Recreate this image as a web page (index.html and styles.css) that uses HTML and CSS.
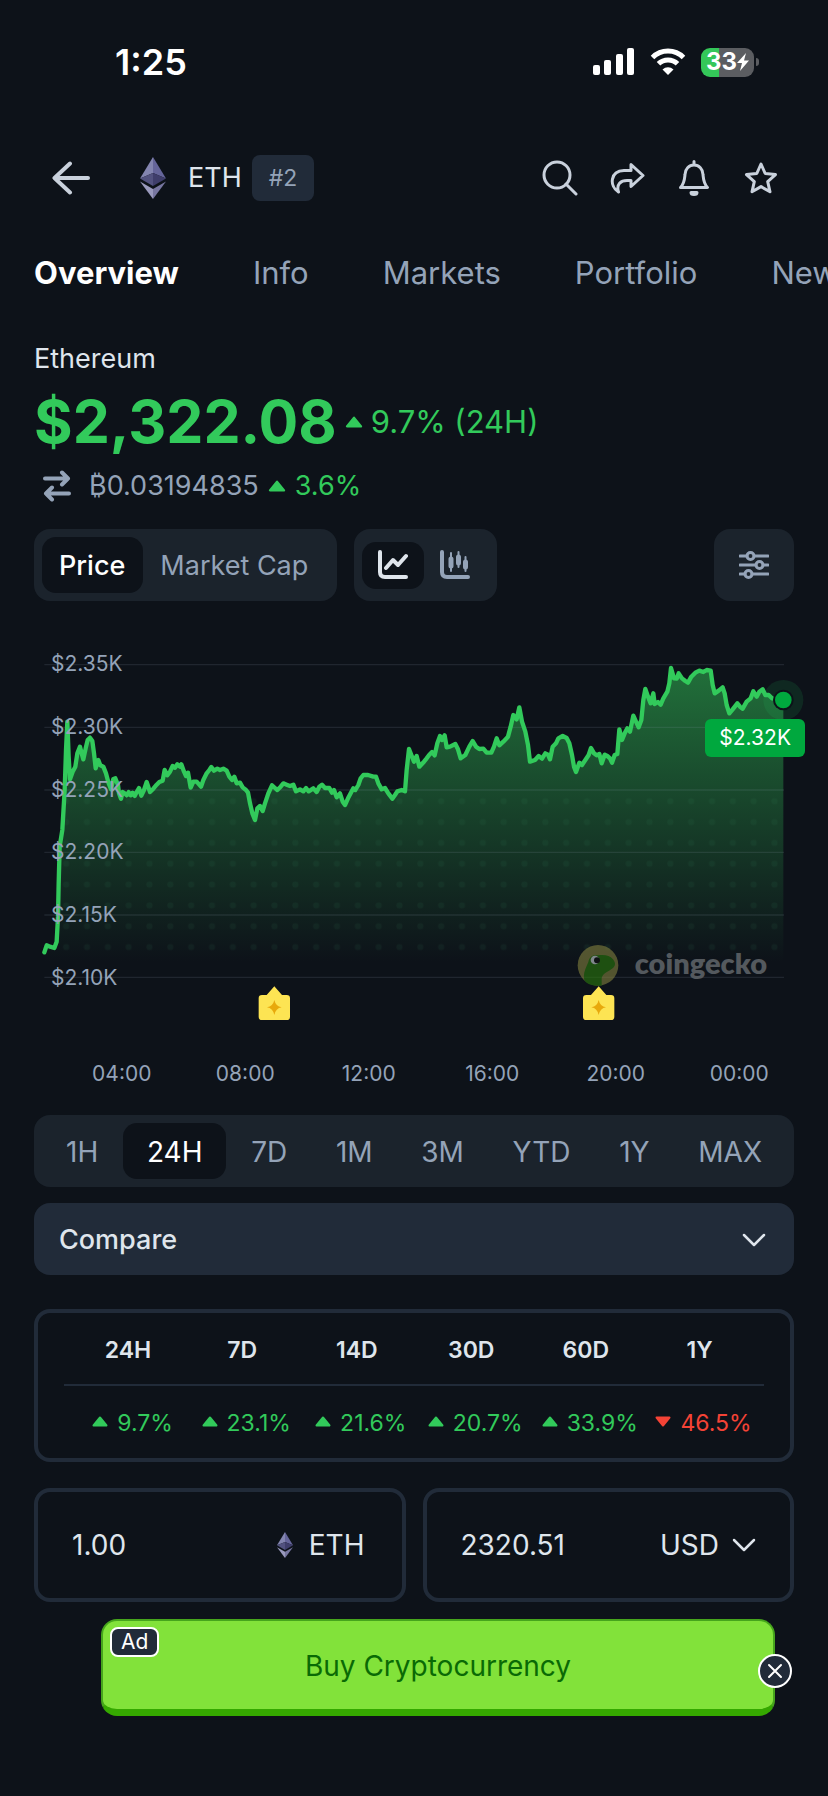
FILE: index.html
```
<!DOCTYPE html>
<html lang="en">
<head>
	<meta charset="utf-8">
	<meta name="viewport" content="width=device-width, initial-scale=1">
	<title>ETH - Ethereum</title>
	<link rel="stylesheet" href="styles.css">
</head>
<body>
	<svg class="defs" width="0" height="0">
		<symbol id="eth" viewBox="0 0 26 42">
			<path d="M13 0L0 21.500l13-5.500z" fill="#8385b0"/>
			<path d="M13 0l13 21.500L13 16z" fill="#65659a"/>
			<path d="M0 21.500L13 16v13z" fill="#52527f"/>
			<path d="M26 21.500L13 16v13z" fill="#3f3e6b"/>
			<path d="M0 24.500L13 32v10z" fill="#9a9abd"/>
			<path d="M26 24.500L13 32v10z" fill="#7776a0"/>
		</symbol>
		<symbol id="up" viewBox="0 0 16 11">
			<path d="M8 1.500L14.500 9.500H1.500z" fill="currentColor" stroke="currentColor" stroke-width="2" stroke-linejoin="round"/>
		</symbol>
		<symbol id="down" viewBox="0 0 16 11">
			<path d="M8 9.500L14.500 1.500H1.500z" fill="currentColor" stroke="currentColor" stroke-width="2" stroke-linejoin="round"/>
		</symbol>
		<symbol id="chevron" viewBox="0 0 24 14">
			<path d="M2 2l10 10L22 2" fill="none" stroke="currentColor" stroke-width="2.500" stroke-linecap="round" stroke-linejoin="round"/>
		</symbol>
	</svg>

	<div class="status">
		<span class="status_time">1:25</span>
		<div class="status_icons">
			<svg width="42" height="28" viewBox="0 0 42 28" fill="#fff">
				<rect x="0" y="17" width="7" height="10" rx="2"/>
				<rect x="11" y="12" width="7" height="15" rx="2"/>
				<rect x="23" y="6" width="7" height="21" rx="2"/>
				<rect x="34" y="0" width="7" height="27" rx="2"/>
			</svg>
			<svg width="36" height="28" viewBox="0 0 36 28" fill="none" stroke="#fff" stroke-width="5">
				<path d="M2.500 9.500a22 22 0 0 1 31 0"/>
				<path d="M8.500 15.800a13.500 13.500 0 0 1 19 0"/>
				<path d="M12.500 21.500a8 8 0 0 1 11 0L18 27z" fill="#fff" stroke="none"/>
			</svg>
			<div class="battery">
				<span>33</span>
				<svg width="12" height="18" viewBox="0 0 12 18"><path d="M9 0L0 10h5L3 18l9-10.500H7z" fill="#fff"/></svg>
			</div>
		</div>
	</div>

	<header class="header">
		<button class="icon_btn back" aria-label="Back">
			<svg width="38" height="34" viewBox="0 0 38 34"><path d="M18 2.500L2.500 17 18 31.500M2.500 17H36"/></svg>
		</button>
		<svg class="coin" width="26" height="42"><use href="#eth"/></svg>
		<span class="symbol">ETH</span>
		<span class="rank">#2</span>
		<div class="actions">
			<button class="icon_btn" aria-label="Search">
				<svg width="36" height="36" viewBox="0 0 36 36"><circle cx="15" cy="15" r="13"/><path d="M24 24l10 10"/></svg>
			</button>
			<button class="icon_btn" aria-label="Share">
				<svg width="36" height="36" viewBox="0 0 36 36"><path d="M22 4.500L34 15.500 22 26.500V20.500h-4C12 20.500 7 24 9.500 32 0 26 1 11 15 10.500h7z"/></svg>
			</button>
			<button class="icon_btn" aria-label="Alerts">
				<svg width="36" height="36" viewBox="0 0 36 36"><path d="M18 1.500V4M4.500 27.500c4-4 4-8 4.500-13a9 9.500 0 0 1 18 0c.500 5 .500 9 4.500 13z"/><path d="M15 32.500h6a3 2 0 0 1-6 0z"/></svg>
			</button>
			<button class="icon_btn" aria-label="Favourite">
				<svg width="36" height="36" viewBox="0 0 36 36"><path d="M18 4l4.200 9.500 10.300 1.100-7.800 7 2.300 10.200-9-5.200-9 5.200 2.300-10.200-7.800-7 10.300-1.100z"/></svg>
			</button>
		</div>
	</header>

	<nav class="tabs">
		<a class="tab active" href="#">Overview</a>
		<a class="tab" href="#">Info</a>
		<a class="tab" href="#">Markets</a>
		<a class="tab" href="#">Portfolio</a>
		<a class="tab" href="#">News</a>
	</nav>

	<main>
		<section class="summary">
			<h1 class="name">Ethereum</h1>
			<div class="price_row">
				<span class="price">$2,322.08</span>
				<svg width="18" height="12"><use href="#up"/></svg>
				<span class="change">9.7% (24H)</span>
			</div>
			<div class="btc_row">
				<svg class="swap" width="28" height="32" viewBox="0 0 28 32"><path d="M2 8.500h23M19 2.500l6 6-6 6M26 23.500H3M9 17.500l-6 6 6 6"/></svg>
				<span class="btc">₿0.03194835</span>
				<svg class="green" width="18" height="12"><use href="#up"/></svg>
				<span class="green">3.6%</span>
			</div>
		</section>

		<div class="toolbar">
			<div class="group">
				<button class="seg active">Price</button>
				<button class="seg">Market Cap</button>
			</div>
			<div class="group">
				<button class="seg_icon active" aria-label="Line chart">
					<svg width="30" height="30" viewBox="0 0 30 30"><path d="M2 2v20q0 5 5 5h21M8 18l7-8 5 5 8-9"/></svg>
				</button>
				<button class="seg_icon" aria-label="Candlestick chart">
					<svg width="30" height="30" viewBox="0 0 30 30"><path d="M2 2v20q0 5 5 5h21"/><path class="thin" d="M11 3v18M18.500 2v15M25.500 7v14"/><path class="body" d="M11 9v7M18.500 7v6M25.500 12v5"/></svg>
				</button>
			</div>
			<button class="settings" aria-label="Chart settings">
				<svg width="30" height="30" viewBox="0 0 30 30"><path d="M1 6h7M15 6h14M1 15h16M24 15h5M1 24h5M13 24h16"/><circle cx="11.500" cy="6" r="3.500"/><circle cx="20.500" cy="15" r="3.500"/><circle cx="9.500" cy="24" r="3.500"/></svg>
			</button>
		</div>

		<section class="chart">
			<svg class="plot" viewBox="-60 0 2484 1230">
				<defs>
					<linearGradient id="fade" gradientUnits="userSpaceOnUse" x1="0" y1="110" x2="0" y2="1042">
						<stop offset="0" stop-color="#34c759" stop-opacity=".52"/>
						<stop offset=".4" stop-color="#34c759" stop-opacity=".3"/>
						<stop offset=".6" stop-color="#34c759" stop-opacity=".19"/>
						<stop offset=".8" stop-color="#34c759" stop-opacity=".08"/>
						<stop offset=".95" stop-color="#34c759" stop-opacity="0"/>
					</linearGradient>
					<pattern id="dots" patternUnits="userSpaceOnUse" x="45" y="420" width="62.500" height="62.500">
						<circle cx="31" cy="31" r="9" fill="#3c8f62" fill-opacity=".09"/>
					</pattern>
				</defs>
				<path id="area" fill="url(#fade)"/>
				<path id="dotted" fill="url(#dots)"/>
				<path class="grid" d="M73 104H2292M73 292H2292M73 480H2292M73 667H2292M73 855H2292M73 1042H2292"/>
				<path id="line"/>
				<circle cx="2290" cy="210" r="60" fill="#22c55e" fill-opacity=".13"/>
				<circle cx="2290" cy="210" r="31" fill="#0d1219"/>
				<circle cx="2290" cy="210" r="25" fill="#00a83e"/>
				<g id="gecko" opacity=".6">
					<circle cx="1734" cy="1006" r="61" fill="#83813f"/>
					<path d="M1693 1050c-5-20 4-34 12-54 4-18 14-22 30-20 20-2 34 0 44 12 8 10 8 18 0 26-14 12-30 14-34 30v23c-20 2-44-2-52-17z" fill="#2a7a0c"/>
					<circle cx="1725" cy="990" r="13" fill="#ccd3d6"/>
					<circle cx="1731" cy="991" r="9" fill="#111"/>
				</g>
				<g id="note">
					<path d="M726 1095h14l23-26 23 26h14q10 0 10 10v55q0 10-10 10h-74q-10 0-10-10v-55q0-10 10-10z" fill="#fde453"/>
					<path d="M763 1110q4 19 22 22-18 3-22 23-4-20-22-23 18-3 22-22z" fill="#e8a90c"/>
				</g>
				<use href="#note" x="973"/>
			</svg>
			<div class="y_axis">
				<span>$2.35K</span>
				<span>$2.30K</span>
				<span>$2.25K</span>
				<span>$2.20K</span>
				<span>$2.15K</span>
				<span>$2.10K</span>
			</div>
			<span class="watermark">coingecko</span>
			<span class="tip">$2.32K</span>
		</section>
		<div class="x_axis">
			<span>04:00</span>
			<span>08:00</span>
			<span>12:00</span>
			<span>16:00</span>
			<span>20:00</span>
			<span>00:00</span>
		</div>

		<div class="ranges">
			<button class="range">1H</button>
			<button class="range active">24H</button>
			<button class="range">7D</button>
			<button class="range">1M</button>
			<button class="range">3M</button>
			<button class="range">YTD</button>
			<button class="range">1Y</button>
			<button class="range">MAX</button>
		</div>

		<button class="compare">
			<span>Compare</span>
			<svg width="24" height="14"><use href="#chevron"/></svg>
		</button>

		<div class="panel performance">
			<table>
				<thead>
					<tr><th>24H</th><th>7D</th><th>14D</th><th>30D</th><th>60D</th><th>1Y</th></tr>
				</thead>
				<tbody>
					<tr>
						<td><svg width="16" height="11"><use href="#up"/></svg>9.7%</td>
						<td><svg width="16" height="11"><use href="#up"/></svg>23.1%</td>
						<td><svg width="16" height="11"><use href="#up"/></svg>21.6%</td>
						<td><svg width="16" height="11"><use href="#up"/></svg>20.7%</td>
						<td><svg width="16" height="11"><use href="#up"/></svg>33.9%</td>
						<td class="red"><svg width="16" height="11"><use href="#down"/></svg>46.5%</td>
					</tr>
				</tbody>
			</table>
		</div>

		<div class="converter">
			<div class="panel field">
				<input id="amount" type="text" value="1.00">
				<svg width="16" height="26"><use href="#eth"/></svg>
				<label for="amount">ETH</label>
			</div>
			<div class="panel field">
				<input type="text" value="2320.51" aria-label="Amount in USD">
				<div class="currency">
					<select aria-label="Currency">
						<option>USD</option>
					</select>
					<svg width="24" height="14"><use href="#chevron"/></svg>
				</div>
			</div>
		</div>

		<div class="ad">
			<a class="ad_link" href="#">Buy Cryptocurrency</a>
			<span class="ad_tag">Ad</span>
			<button class="ad_close" aria-label="Close ad">
				<svg width="16" height="16" viewBox="0 0 16 16"><path d="M2 2l12 12M14 2L2 14"/></svg>
			</button>
		</div>
	</main>
	<script src="script.js"></script>
</body>
</html>
```

FILE: styles.css
```
* {
	box-sizing: border-box;
}
body {
	margin: 0;
	background-color: #0d1219;
	color: #dfe5ec;
	font-family: Inter, "Noto Sans", sans-serif;
	font-size: 28px;
	line-height: 40px;
	overflow-x: hidden;
}
button, input, select {
	margin: 0;
	padding: 0;
	border: 0;
	background: none;
	color: inherit;
	font: inherit;
}
a {
	text-decoration: none;
}
svg {
	display: block;
	flex: none;
}
.defs {
	position: absolute;
}
.green {
	color: #32ca5b;
}

/* status bar */
.status {
	display: flex;
	align-items: center;
	justify-content: space-between;
	height: 124px;
	padding: 0 69px 0 115px;
	color: #fff;
}
.status_time {
	font-size: 36px;
	font-weight: 600;
}
.status_icons {
	display: flex;
	align-items: center;
	gap: 15px;
}
.battery {
	position: relative;
	display: flex;
	align-items: center;
	justify-content: center;
	width: 53px;
	height: 29px;
	margin-right: 5px;
	border-radius: 9px;
	background: linear-gradient(to right, #34c759 34%, #5b5d61 34%);
	font-size: 24px;
	font-weight: 700;
}
.battery::after {
	content: "";
	position: absolute;
	right: -5px;
	width: 3px;
	height: 8px;
	border-radius: 0 3px 3px 0;
	background-color: #5b5d61;
}

/* header */
.header {
	display: flex;
	align-items: center;
	height: 108px;
	padding: 0 49px 0 52px;
}
.icon_btn svg {
	fill: none;
	stroke: #c9d1dc;
	stroke-width: 3;
	stroke-linecap: round;
	stroke-linejoin: round;
}
.back svg {
	stroke-width: 4;
}
.coin {
	margin: 0 22px 0 50px;
}
.symbol {
	font-size: 27px;
}
.rank {
	margin-left: 10px;
	padding: 3px 17px;
	border-radius: 8px;
	background-color: #212b39;
	color: #94a3b8;
	font-size: 23px;
}
.actions {
	display: flex;
	gap: 31px;
	margin-left: auto;
}

/* tabs */
.tabs {
	display: flex;
	align-items: center;
	gap: 74px;
	height: 82px;
	padding-left: 34px;
	overflow: hidden;
	font-size: 31px;
}
.tab {
	color: #94a3b8;
}
.tab.active {
	color: #fff;
	font-weight: 700;
}

main {
	padding: 25px 34px 80px;
}
.name {
	margin: 0;
	font-size: 27px;
	font-weight: 400;
}
.price_row {
	display: flex;
	align-items: center;
	gap: 8px;
	height: 86px;
	color: #32ca5b;
}
.price {
	font-size: 59px;
	font-weight: 700;
}
.change {
	font-size: 31px;
}
.btc_row {
	display: flex;
	align-items: center;
	gap: 9px;
	height: 42px;
	font-size: 27px;
}
.swap {
	margin: 0 9px;
	fill: none;
	stroke: #94a3b8;
	stroke-width: 4;
	stroke-linecap: round;
	stroke-linejoin: round;
}
.btc {
	color: #94a3b8;
}

/* chart switches */
.toolbar {
	display: flex;
	gap: 17px;
	height: 72px;
	margin-top: 22px;
	font-size: 27px;
}
.group {
	display: flex;
	align-items: center;
	padding: 8px 11px 8px 8px;
	border-radius: 16px;
	background-color: #1b232c;
}
.seg {
	height: 56px;
	padding: 2px 18px 0 17px;
	border-radius: 14px;
	color: #94a3b8;
}
.seg_icon {
	display: flex;
	align-items: center;
	justify-content: center;
	width: 62px;
	height: 47px;
	border-radius: 14px;
	color: #94a3b8;
}
.seg.active, .seg_icon.active {
	background-color: #0d1219;
	color: #fff;
}
.seg.active {
	font-weight: 500;
}
.seg_icon svg, .settings svg {
	fill: none;
	stroke: currentColor;
	stroke-width: 4;
	stroke-linecap: round;
	stroke-linejoin: round;
}
.seg_icon.active svg {
	color: #dfe5ec;
}
.seg_icon .thin {
	stroke-width: 2;
}
.seg_icon .body {
	stroke-width: 5;
}
.settings {
	display: flex;
	align-items: center;
	justify-content: center;
	width: 80px;
	margin-left: auto;
	border-radius: 16px;
	background-color: #1b232c;
	color: #94a3b8;
}
.settings svg {
	stroke-width: 3;
}

/* chart */
.chart {
	position: relative;
	margin: 29px -34px 0;
}
.plot {
	width: 100%;
	height: auto;
}
.grid {
	fill: none;
	stroke: #94a3b8;
	stroke-opacity: .14;
	stroke-width: 4;
}
#line {
	fill: none;
	stroke: #32ca5b;
	stroke-width: 13;
	stroke-linecap: round;
	stroke-linejoin: round;
}
.y_axis {
	position: absolute;
	top: 3px;
	left: 51px;
	height: calc(92% - 1px);
	display: flex;
	flex-direction: column;
	justify-content: space-around;
	color: #94a3b8;
	font-size: 21px;
}
.watermark {
	position: absolute;
	right: 61px;
	bottom: 57px;
	color: #54595e;
	font-family: Lato, sans-serif;
	font-size: 29px;
	font-weight: 800;
}
.tip {
	position: absolute;
	top: 89px;
	right: 23px;
	padding: 0 14px;
	border-radius: 6px;
	background-color: #00a83e;
	color: #fff;
	font-size: 21px;
	line-height: 38px;
}
.x_axis {
	display: grid;
	grid-template-columns: repeat(6, 1fr);
	margin-right: -7px;
	padding: 14px 0 21px 26px;
	color: #94a3b8;
	font-size: 21px;
	text-align: center;
}

/* ranges */
.ranges {
	display: flex;
	align-items: center;
	justify-content: space-between;
	height: 72px;
	padding: 8px;
	border-radius: 16px;
	background-color: #1b232c;
}
.range {
	height: 56px;
	padding: 2px 24px 0;
	border-radius: 14px;
	color: #94a3b8;
}
.range.active {
	background-color: #0d1219;
	color: #fff;
}
.compare {
	display: flex;
	align-items: center;
	justify-content: space-between;
	width: 100%;
	height: 72px;
	margin-top: 16px;
	padding: 2px 28px 0 25px;
	border-radius: 16px;
	background-color: #212b39;
	font-size: 27px;
	font-weight: 500;
}

/* performance table */
.panel {
	border: 4px solid #212b39;
	border-radius: 16px;
}
.performance {
	margin-top: 34px;
	padding: 0 26px;
}
table {
	width: 100%;
	table-layout: fixed;
	border-collapse: collapse;
	font-size: 23px;
}
th, td {
	height: 72px;
	padding: 2px 0 0;
	text-align: center;
	white-space: nowrap;
}
th {
	border-bottom: 2px solid #212b39;
	font-weight: 600;
}
th:first-child {
	width: 121px;
	padding-left: 7px;
}
th:last-child {
	width: 121px;
	padding-right: 8px;
}
td {
	height: 73px;
	padding-left: 8px;
	color: #32ca5b;
}
td.red {
	padding-right: 8px;
	color: #f44336;
}
td:first-child {
	padding-left: 16px;
}
td svg {
	display: inline-block;
	margin-right: 9px;
	vertical-align: 4px;
}

/* converter */
.converter {
	display: grid;
	grid-template-columns: repeat(2, minmax(0, 1fr));
	gap: 17px;
	margin-top: 26px;
}
.field {
	display: flex;
	align-items: center;
	height: 114px;
	padding: 0 34px;
}
.field input {
	flex: 1;
	min-width: 0;
}
.field label {
	margin: 0 3px 0 16px;
}
.currency {
	position: relative;
	display: flex;
	align-items: center;
}
.currency select {
	appearance: none;
	padding-right: 36px;
}
.currency svg {
	position: absolute;
	right: 0;
	pointer-events: none;
}

/* ad */
.ad {
	position: relative;
	margin: 17px 19px 0 67px;
}
.ad_link {
	display: block;
	padding-top: 2px;
	border: 2px solid #46a51c;
	border-bottom: 7px solid #35a800;
	border-radius: 16px;
	background-color: #82e23a;
	color: #0a6a05;
	line-height: 86px;
	text-align: center;
}
.ad_tag {
	position: absolute;
	top: 8px;
	left: 9px;
	padding: 0 9px;
	border: 2px solid #fff;
	border-radius: 8px;
	background-color: #212b39;
	color: #fff;
	font-size: 21px;
	line-height: 26px;
}
.ad_close {
	position: absolute;
	top: 35px;
	right: -17px;
	display: flex;
	align-items: center;
	justify-content: center;
	width: 34px;
	height: 34px;
	border: 2px solid #fff;
	border-radius: 50%;
	background-color: #212b39;
}
.ad_close svg {
	fill: none;
	stroke: #fff;
	stroke-width: 2;
	stroke-linecap: round;
}
```

FILE: script.js
```
let points = '73,967 80,946 90,950 103,954 110,935 114,860 116,760 119,650 127,600 134,480 138,360 142,275 146,380 150,448 158,425 166,410 172,370 180,350 185,370 190,388 197,355 203,330 210,323 217,333 222,370 227,415 235,390 241,406 250,410 258,430 266,460 273,478 280,447 286,445 294,465 297,490 303,506 308,486 314,490 320,496 326,486 332,496 338,488 344,498 350,486 357,474 364,497 372,480 380,456 390,486 400,476 410,464 418,456 428,452 434,420 442,436 450,425 458,408 465,413 472,403 480,410 484,403 492,425 498,438 504,428 512,473 520,455 530,455 543,470 550,450 560,430 568,420 574,411 582,422 592,416 600,420 610,416 620,422 628,440 636,450 643,440 650,460 660,458 668,472 678,480 684,488 690,520 697,550 705,570 712,535 720,528 728,543 735,520 745,490 756,466 765,474 772,480 782,470 790,460 800,464 810,468 820,464 828,484 840,478 850,484 858,474 866,484 880,475 890,486 898,470 906,464 915,474 928,474 936,488 942,480 950,502 960,490 968,515 975,525 984,505 992,490 1000,475 1006,480 1015,465 1022,445 1030,435 1044,435 1060,440 1068,440 1075,460 1085,478 1095,474 1105,490 1117,506 1125,495 1132,484 1145,480 1155,484 1160,420 1167,357 1174,375 1182,395 1190,378 1198,410 '
	+ '1212,395 1220,385 1228,374 1236,366 1244,376 1252,340 1260,318 1266,330 1274,316 1280,352 1290,350 1306,342 1314,358 1322,385 1336,375 1348,350 1358,333 1368,350 1378,357 1390,356 1400,368 1414,368 1422,350 1430,325 1438,346 1450,335 1464,320 1472,290 1480,255 1490,268 1498,232 1506,275 1516,305 1524,345 1530,395 1545,390 1556,378 1566,386 1576,370 1584,374 1590,388 1598,350 1608,340 1615,325 1628,318 1640,324 1648,340 1656,375 1662,410 1668,426 1678,398 1686,405 1696,390 1706,375 1713,354 1722,370 1730,376 1738,372 1745,400 1754,374 1762,378 1770,385 1776,398 1784,375 1792,372 1798,298 1806,330 1814,310 1822,295 1830,305 1840,257 1848,275 1856,292 1864,270 1870,210 1876,177 1884,200 1892,220 1900,190 1904,222 1914,216 1922,224 1930,205 1942,185 1948,160 1953,114 1962,145 1970,146 1976,130 1986,145 1996,153 2004,158 2014,140 2026,128 2038,122 2050,126 2060,120 2072,122 2078,165 2084,190 2096,182 2108,172 2114,190 2120,225 2128,250 2138,238 2152,220 2160,230 2168,236 2180,215 2192,205 2200,184 2210,200 2218,185 2228,178 2236,195 2246,195 2256,205 2290,210';

document.getElementById('line').setAttribute('d', 'M' + points);
document.getElementById('area').setAttribute('d', 'M' + points + ' V1042 H73 Z');
// dots only cover the lower part of the area
document.getElementById('dotted').setAttribute('d', 'M110,482 H2290 V975 H110 Z');
```
